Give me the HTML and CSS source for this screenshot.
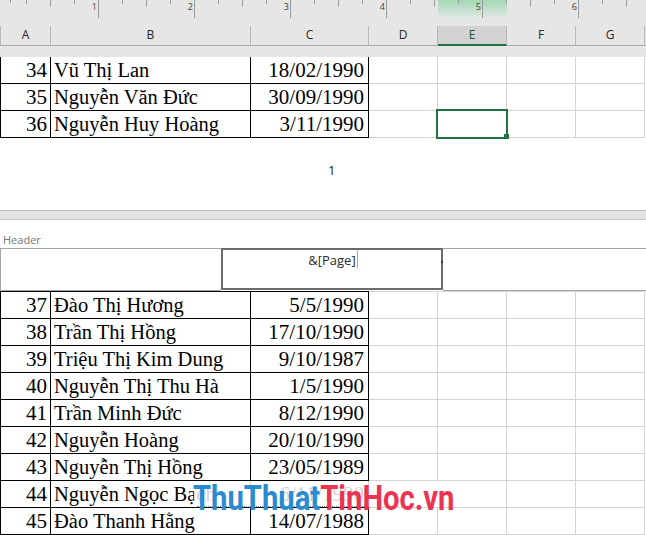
FILE: index.html
```html
<!DOCTYPE html>
<html lang="vi">
<head>
<meta charset="utf-8">
<title>Page Layout</title>
<link rel="stylesheet" href="styles.css">
</head>
<body>
<div class="sheet">
  <div class="top">
    <svg class="ruler" width="646" height="26" viewBox="0 0 646 26">
      <defs>
        <linearGradient id="hl" x1="0" y1="0" x2="0" y2="1">
          <stop offset="0" stop-color="#a2d8b6"/>
          <stop offset="1" stop-color="#e2e8e4"/>
        </linearGradient>
      </defs>
      <rect x="438" y="0" width="69" height="18" fill="url(#hl)"/>
      <g stroke="#9a9a9a" stroke-width="1">
        <line x1="10.5" y1="0" x2="10.5" y2="3"/>
        <line x1="26.5" y1="0" x2="26.5" y2="4"/>
        <line x1="50.5" y1="0" x2="50.5" y2="7"/>
        <line x1="74.5" y1="0" x2="74.5" y2="4"/>
        <line x1="98.5" y1="0" x2="98.5" y2="18"/>
        <line x1="122.5" y1="0" x2="122.5" y2="4"/>
        <line x1="146.5" y1="0" x2="146.5" y2="7"/>
        <line x1="170.5" y1="0" x2="170.5" y2="4"/>
        <line x1="194.5" y1="0" x2="194.5" y2="18"/>
        <line x1="218.5" y1="0" x2="218.5" y2="4"/>
        <line x1="242.5" y1="0" x2="242.5" y2="7"/>
        <line x1="266.5" y1="0" x2="266.5" y2="4"/>
        <line x1="290.5" y1="0" x2="290.5" y2="18"/>
        <line x1="314.5" y1="0" x2="314.5" y2="4"/>
        <line x1="338.5" y1="0" x2="338.5" y2="7"/>
        <line x1="362.5" y1="0" x2="362.5" y2="4"/>
        <line x1="386.5" y1="0" x2="386.5" y2="18"/>
        <line x1="410.5" y1="0" x2="410.5" y2="4"/>
        <line x1="434.5" y1="0" x2="434.5" y2="7"/>
        <line x1="458.5" y1="0" x2="458.5" y2="4"/>
        <line x1="482.5" y1="0" x2="482.5" y2="18"/>
        <line x1="506.5" y1="0" x2="506.5" y2="4"/>
        <line x1="530.5" y1="0" x2="530.5" y2="7"/>
        <line x1="554.5" y1="0" x2="554.5" y2="4"/>
        <line x1="578.5" y1="0" x2="578.5" y2="18"/>
        <line x1="602.5" y1="0" x2="602.5" y2="4"/>
        <line x1="626.5" y1="0" x2="626.5" y2="7"/>
      </g>
      <g class="rnum">
        <text x="97" y="10" text-anchor="end">1</text>
        <text x="193" y="10" text-anchor="end">2</text>
        <text x="289" y="10" text-anchor="end">3</text>
        <text x="385" y="10" text-anchor="end">4</text>
        <text x="481" y="10" text-anchor="end">5</text>
        <text x="577" y="10" text-anchor="end">6</text>
      </g>
    </svg>
    <div class="colhead">
      <div class="ch a">A</div>
      <div class="ch">B</div>
      <div class="ch">C</div>
      <div class="ch">D</div>
      <div class="ch on">E</div>
      <div class="ch">F</div>
      <div class="ch">G</div>
      <div class="ch end"></div>
    </div>
  </div>

  <div class="sec">
    <div class="row">
      <div class="c k n">34</div><div class="c k nm">Vũ Thị Lan</div><div class="c k d">18/02/1990</div>
      <div class="c"></div><div class="c"></div><div class="c"></div><div class="c"></div><div class="z"></div>
    </div>
    <div class="row">
      <div class="c k n">35</div><div class="c k nm">Nguyễn Văn Đức</div><div class="c k d">30/09/1990</div>
      <div class="c"></div><div class="c"></div><div class="c"></div><div class="c"></div><div class="z"></div>
    </div>
    <div class="row">
      <div class="c k n">36</div><div class="c k nm">Nguyễn Huy Hoàng</div><div class="c k d">3/11/1990</div>
      <div class="c"></div><div class="c active"><span class="selbox"><span class="handle"></span></span></div><div class="c"></div><div class="c"></div><div class="z"></div>
    </div>
  </div>

  <div class="pageno">1</div>
  <div class="band"></div>
  <div class="hlabel">Header</div>
  <div class="hdr">
    <div class="hl"></div>
    <div class="hc">&amp;[Page]<span class="caret"></span><span class="mark"></span></div>
    <div class="hr"></div>
  </div>

  <div class="sec sec2">
    <div class="row first">
      <div class="c k n">37</div><div class="c k nm">Đào Thị Hương</div><div class="c k d">5/5/1990</div>
      <div class="c"></div><div class="c"></div><div class="c"></div><div class="c"></div><div class="z"></div>
    </div>
    <div class="row">
      <div class="c k n">38</div><div class="c k nm">Trần Thị Hồng</div><div class="c k d">17/10/1990</div>
      <div class="c"></div><div class="c"></div><div class="c"></div><div class="c"></div><div class="z"></div>
    </div>
    <div class="row">
      <div class="c k n">39</div><div class="c k nm">Triệu Thị Kim Dung</div><div class="c k d">9/10/1987</div>
      <div class="c"></div><div class="c"></div><div class="c"></div><div class="c"></div><div class="z"></div>
    </div>
    <div class="row">
      <div class="c k n">40</div><div class="c k nm">Nguyễn Thị Thu Hà</div><div class="c k d">1/5/1990</div>
      <div class="c"></div><div class="c"></div><div class="c"></div><div class="c"></div><div class="z"></div>
    </div>
    <div class="row">
      <div class="c k n">41</div><div class="c k nm">Trần Minh Đức</div><div class="c k d">8/12/1990</div>
      <div class="c"></div><div class="c"></div><div class="c"></div><div class="c"></div><div class="z"></div>
    </div>
    <div class="row">
      <div class="c k n">42</div><div class="c k nm">Nguyễn Hoàng</div><div class="c k d">20/10/1990</div>
      <div class="c"></div><div class="c"></div><div class="c"></div><div class="c"></div><div class="z"></div>
    </div>
    <div class="row">
      <div class="c k n">43</div><div class="c k nm">Nguyễn Thị Hồng</div><div class="c k d">23/05/1989</div>
      <div class="c"></div><div class="c"></div><div class="c"></div><div class="c"></div><div class="z"></div>
    </div>
    <div class="row">
      <div class="c k n">44</div><div class="c k nm">Nguyễn Ngọc Bạch</div><div class="c k d">6/11/1990</div>
      <div class="c"></div><div class="c"></div><div class="c"></div><div class="c"></div><div class="z"></div>
    </div>
    <div class="row">
      <div class="c k n">45</div><div class="c k nm">Đào Thanh Hằng</div><div class="c k d">14/07/1988</div>
      <div class="c"></div><div class="c"></div><div class="c"></div><div class="c"></div><div class="z"></div>
    </div>
  </div>

  <div class="wm"><span class="wm-dots"></span><span class="wm-t"><span class="blue">ThuThuat</span><span class="red">TinHoc.vn</span></span></div>
</div>
</body>
</html>
```

FILE: styles.css
```css
html, body {
  margin: 0;
  padding: 0;
  background: #ffffff;
}

.sheet {
  position: relative;
  width: 646px;
  height: 535px;
  overflow: hidden;
  font-family: "Liberation Serif", "Times New Roman", serif;
  color: #000;
}

.top {
  height: 57px;
  background: #e6e6e6;
}

.ruler {
  display: block;
}

.rnum text {
  font-family: "Open Sans", "Liberation Sans", sans-serif;
  font-size: 9px;
  fill: #444;
}

.colhead,
.row {
  display: grid;
  grid-template-columns: 51px 200px 118px 69px 69px 69px 69px 1fr;
}

.colhead {
  height: 20px;
}

.ch {
  box-sizing: border-box;
  border-right: 1px solid #b8b8b8;
  border-bottom: 1px solid #ababab;
  font-family: "Open Sans", "Liberation Sans", sans-serif;
  font-size: 12px;
  line-height: 17px;
  text-align: center;
  color: #262626;
}

.ch.a {
  border-left: 1px solid #b8b8b8;
}

.ch.on {
  background: #d2d2d2;
  color: #1d5a35;
  border-bottom: 2px solid #217346;
}

.ch.end {
  border-right: none;
}

.row {
  height: 27px;
}

.row.first {
  height: 28px;
}

.c {
  box-sizing: border-box;
  border-style: none solid solid none;
  border-width: 0 1px 1px 0;
  border-color: #d4d4d4;
  display: flex;
  align-items: flex-end;
  padding-bottom: 2px;
  font-size: 21px;
  line-height: 21px;
  white-space: nowrap;
  overflow: hidden;
}

.row.first .c {
  border-top-style: solid;
  border-top-width: 1px;
}

.c.k {
  border-color: #000;
}

.c.n {
  justify-content: flex-end;
  padding-right: 3px;
  border-left-style: solid;
  border-left-width: 1px;
}

.c.nm {
  padding-left: 3px;
  font-size: 20.5px;
}

.c.d {
  justify-content: flex-end;
  padding-right: 4px;
}

.c.active {
  position: relative;
  overflow: visible;
}

.selbox {
  position: absolute;
  left: -2px;
  top: -2px;
  width: 72px;
  height: 30px;
  box-sizing: border-box;
  border: 2px solid #217346;
}

.handle {
  position: absolute;
  left: 66px;
  top: 23px;
  width: 5px;
  height: 5px;
  background: #217346;
}

.pageno {
  height: 72px;
  box-sizing: border-box;
  padding: 24px 0 0 328px;
  font-family: "Open Sans", "Liberation Sans", sans-serif;
  font-size: 13px;
  line-height: 16px;
  color: #222;
}

.band {
  height: 10px;
  box-sizing: border-box;
  background: #e3e3e3;
  border-top: 1px solid #bcbcbc;
  border-bottom: 1px solid #c8c8c8;
}

.hlabel {
  height: 28px;
  box-sizing: border-box;
  display: flex;
  align-items: flex-end;
  padding: 0 0 1px 3px;
  font-family: "Open Sans", "Liberation Sans", sans-serif;
  font-size: 11px;
  line-height: 14px;
  color: #757575;
}

.hdr {
  display: flex;
  height: 43px;
}

.hl {
  width: 221px;
  box-sizing: border-box;
  border: 1px solid #a5a5a5;
  border-right: none;
}

.hc {
  position: relative;
  width: 222px;
  height: 42px;
  box-sizing: border-box;
  border: 2px solid #6c6c6c;
  padding-top: 2px;
  text-align: center;
  font-family: "Open Sans", "Liberation Sans", sans-serif;
  font-size: 13px;
  line-height: 16px;
  color: #2b2b2b;
}

.caret {
  display: inline-block;
  width: 1px;
  height: 18px;
  margin-left: 1px;
  margin-right: -2px;
  vertical-align: top;
  margin-top: -2px;
  background: #a8a8a8;
}

.mark {
  position: absolute;
  right: -2px;
  top: 11px;
  width: 2px;
  height: 2px;
  background: #333;
}

.hr {
  flex: 1;
  box-sizing: border-box;
  border-top: 1px solid #a5a5a5;
  border-bottom: 1px solid #a5a5a5;
}

.wm {
  position: absolute;
  left: 194px;
  top: 481px;
  width: 262px;
  height: 26px;
  background: rgba(255, 255, 255, 0.82);
}

.wm-dots {
  position: absolute;
  left: 3px;
  top: 25px;
  width: 172px;
  border-top: 1px dotted #8a8a8a;
}

.wm-t {
  position: absolute;
  left: -1px;
  top: 0;
  font-family: Roboto, "Liberation Sans", sans-serif;
  font-weight: 700;
  font-size: 35px;
  line-height: 35px;
  white-space: nowrap;
  transform: scaleX(0.835);
  transform-origin: 0 0;
}

.blue {
  color: #2a8bd0;
}

.red {
  color: #ec3452;
}
```
